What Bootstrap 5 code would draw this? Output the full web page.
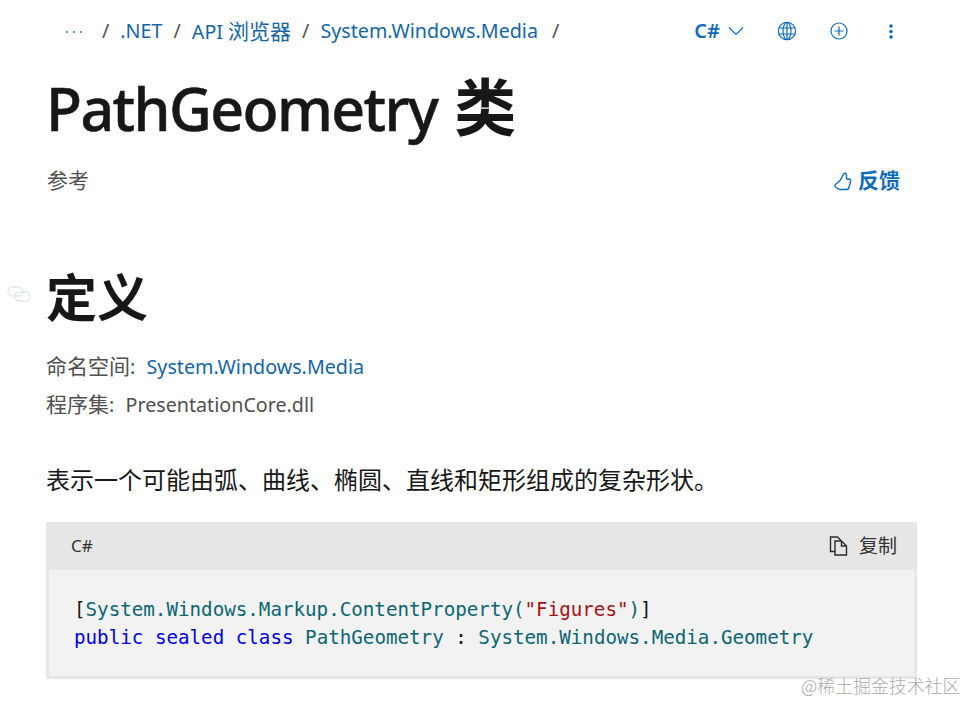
<!DOCTYPE html>
<html lang="zh-CN">
<head>
<meta charset="utf-8">
<title>PathGeometry 类</title>
<link href="https://cdn.jsdelivr.net/npm/bootstrap@5.3.0/dist/css/bootstrap.min.css" rel="stylesheet">
<style>
html,body{height:701px;overflow:hidden}
body{position:relative;background:#fff;color:#171717;font-family:"Noto Sans","Noto Sans CJK SC",sans-serif;font-size:19.7px}
a{color:#1565a8;text-decoration:none}
.cjk{font-size:21px}
.page-wrap{padding:0 50px 0 46px}
.top-bar{height:62px;padding-left:18px}
.top-bar .breadcrumb{--bs-breadcrumb-item-padding-x:11px;--bs-breadcrumb-margin-bottom:0;margin:0;font-size:19.7px;line-height:28px}
.breadcrumb-item+.breadcrumb-item::before{color:#505050}
.dots-item{padding-right:7px}
.tail-item{margin-left:3px}
.top-tools{color:#0f6cbd;padding-right:24px}
.lang-pick{font-weight:600;font-size:20px;color:#0f6cbd}
.page-title{font-size:59px;font-weight:500;line-height:80px;letter-spacing:-1.6px;margin:5px 0 0 0;color:#171717;-webkit-text-stroke:.5px #171717}
.page-title .cjk-big{font-size:62px;font-weight:700;letter-spacing:0;-webkit-text-stroke:0;margin-left:3px}
.meta-row{height:48px;margin-top:9px}
.ref-label{font-size:21px;color:#505050;margin-left:1px}
.feedback-link{font-weight:700;font-size:21px;color:#0f6cbd;padding-right:17px;gap:6px}
.def-title{font-size:51px;font-weight:700;line-height:70px;margin:57px 0 0 0}
.anchor-mark{position:absolute;left:7px;top:286px}
.meta-line{line-height:28px;color:#505050;margin:0}
.meta-key{margin-right:1px}
.ns-line{margin-top:20px;margin-bottom:9px}
.summary{font-size:24px;line-height:32px;margin:45px 0 26px;color:#171717}
.code-box{background:#e6e6e6;padding:0 3px 3px 3px;height:157px}
.code-head{height:48px;padding:0 17px 0 22px;font-size:17px;color:#333}
.copy-text{font-size:19px}
.copy-btn{gap:11px}
.code-body{background:#f2f2f2;height:106px;margin:0;padding:26px 0 0 25px;font-family:"DejaVu Sans Mono","Liberation Mono",monospace;font-size:19.200px;line-height:28px;color:#171717;overflow:hidden}
.code-body code{font:inherit;color:inherit}
.c-type{color:#0b6672}
.c-kw{color:#0000e6}
.c-str{color:#a31515}
.wm{position:absolute;left:801px;top:672px;font-size:17.900px;line-height:26px;color:#aaa;font-family:"Noto Sans CJK SC","Noto Sans",sans-serif;font-weight:300;white-space:nowrap}
</style>
</head>
<body>
<div class="page-wrap">
  <div class="top-bar d-flex align-items-center justify-content-between">
    <ol class="breadcrumb align-items-center">
      <li class="breadcrumb-item dots-item"><a href="#"><svg width="20" height="6" viewBox="0 0 20 6" aria-label="更多"><g fill="#0f6cbd"><circle cx="3" cy="2" r=".9"/><circle cx="10" cy="2" r=".9"/><circle cx="17" cy="2" r=".9"/></g></svg></a></li>
      <li class="breadcrumb-item"><a href="#">.NET</a></li>
      <li class="breadcrumb-item"><a href="#">API <span class="cjk">浏览器</span></a></li>
      <li class="breadcrumb-item"><a href="#">System.Windows.Media</a></li>
      <li class="breadcrumb-item tail-item"></li>
    </ol>
    <div class="top-tools d-flex align-items-center">
      <span class="lang-pick">C#</span>
      <svg class="ms-2" width="16" height="10" viewBox="0 0 16 10"><path d="M1 1.500 8 8.500 15 1.500" fill="none" stroke="#0f6cbd" stroke-width="1.200"/></svg>
      <svg style="margin-left:33px" width="20" height="20" viewBox="0 0 20 20"><g fill="none" stroke="#0f6cbd" stroke-width="1.200"><circle cx="10" cy="10" r="8.600"/><ellipse cx="10" cy="10" rx="4" ry="8.600"/><path d="M1.600 7h16.800M1.600 13h16.800M10 1.400v17.200"/></g></svg>
      <svg style="margin-left:33px" width="18" height="18" viewBox="0 0 18 18"><g fill="none" stroke="#0f6cbd" stroke-width="1.200"><circle cx="9" cy="9" r="8"/><path d="M9 4.500v9M4.500 9h9"/></g></svg>
      <svg style="margin-left:41px" width="4" height="15" viewBox="0 0 4 15"><g fill="#0f6cbd"><circle cx="2" cy="2" r="1.800"/><circle cx="2" cy="7.500" r="1.800"/><circle cx="2" cy="13" r="1.800"/></g></svg>
    </div>
  </div>
  <h1 class="page-title">PathGeometry <span class="cjk-big">类</span></h1>
  <div class="meta-row d-flex align-items-center justify-content-between">
    <span class="ref-label">参考</span>
    <a class="feedback-link d-flex align-items-center" href="#">
      <svg width="18" height="19" viewBox="0 0 18 19"><path d="M1.500 12.500 6.500 8 9.500 2c.6-1.300 3-1 3 1v4h2.500c1.200 0 1.900 1 1.600 2.100l-1.600 6.400c-.3 1.300-1.200 2-2.500 2H6.500c-1.500 0-2.500-.5-3.500-1.500L1.500 15c-.6-.8-.6-1.800 0-2.500Z" fill="none" stroke="#0f6cbd" stroke-width="1.400" stroke-linejoin="round"/></svg>
      <span>反馈</span>
    </a>
  </div>
  <h2 class="def-title">定义</h2>
  <svg class="anchor-mark" width="24" height="16" viewBox="0 0 24 16"><g fill="none" stroke="#e0e7ee" stroke-width="1.300"><rect x="1" y="1" width="15" height="9" rx="4.500"/><rect x="8" y="6" width="15" height="9" rx="4.500"/></g></svg>
  <p class="meta-line ns-line"><span class="cjk">命名空间</span><span class="meta-key">:</span>&nbsp; <a href="#">System.Windows.Media</a></p>
  <p class="meta-line"><span class="cjk">程序集</span><span class="meta-key">:</span>&nbsp; PresentationCore.dll</p>
  <p class="summary">表示一个可能由弧、曲线、椭圆、直线和矩形组成的复杂形状。</p>
  <div class="code-box">
    <div class="code-head d-flex align-items-center justify-content-between">
      <span>C#</span>
      <span class="copy-btn d-flex align-items-center">
        <svg width="19" height="20" viewBox="0 0 19 20"><g fill="none" stroke="#2b2b2b" stroke-width="1.400"><path d="M6 15.500H1.500V1h7l3.500 3.500"/><path d="M6 5h6.500l5 5v9H6Z"/><path d="M12.500 5v5h5"/></g></svg>
        <span class="copy-text">复制</span>
      </span>
    </div>
    <pre class="code-body"><code><span>[</span><span class="c-type">System.Windows.Markup.ContentProperty(</span><span class="c-str">"Figures"</span><span class="c-type">)</span><span>]</span>
<span class="c-kw">public</span> <span class="c-kw">sealed</span> <span class="c-kw">class</span> <span class="c-type">PathGeometry</span> : <span class="c-type">System.Windows.Media.Geometry</span></code></pre>
  </div>
</div>
<div class="wm">@稀土掘金技术社区</div>
<script src="https://cdn.jsdelivr.net/npm/bootstrap@5.3.0/dist/js/bootstrap.bundle.min.js"></script>
</body>
</html>
